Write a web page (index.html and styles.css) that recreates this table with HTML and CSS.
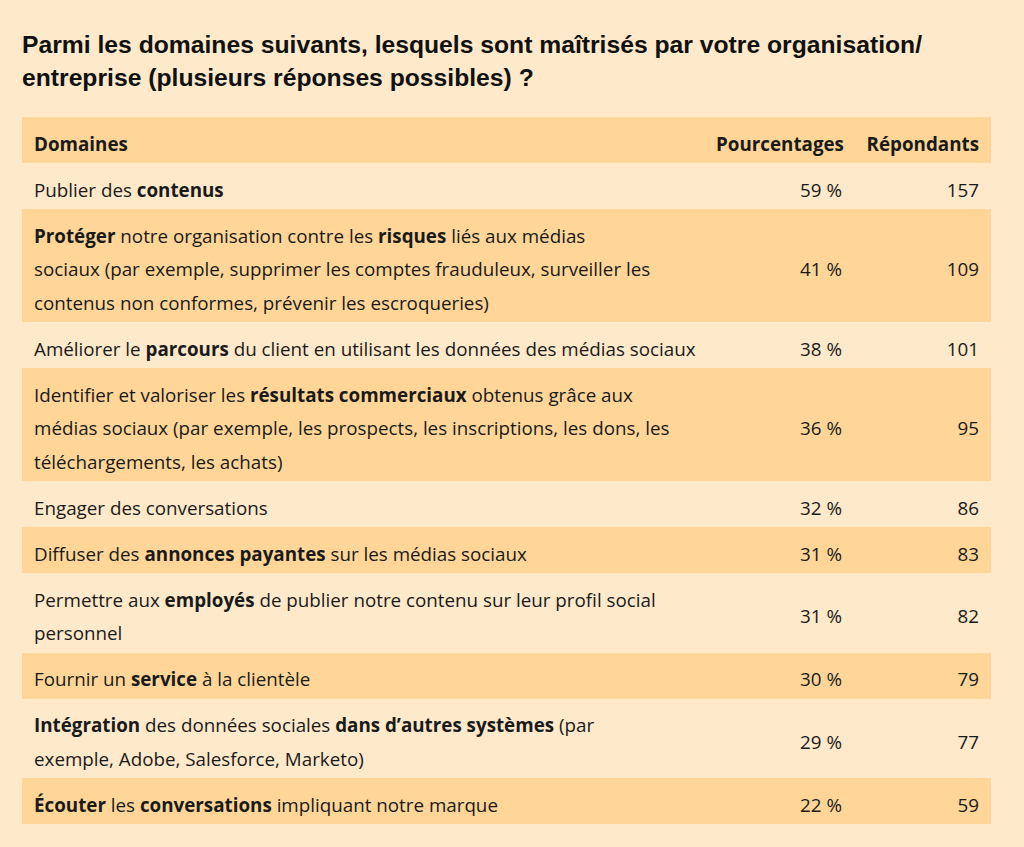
FILE: index.html
```html
<!DOCTYPE html>
<html lang="fr">
<head>
<meta charset="utf-8">
<link rel="stylesheet" href="styles.css">
</head>
<body>
<main class="page">
  <h1 class="title">Parmi les domaines suivants, lesquels sont maîtrisés par votre organisation/<br>entreprise (plusieurs réponses possibles) ?</h1>
  <div class="table">
    <div class="row head">
      <div class="c1">Domaines</div>
      <div class="c2">Pourcentages</div>
      <div class="c3">Répondants</div>
    </div>
    <div class="row light">
      <div class="c1">Publier des <b>contenus</b></div>
      <div class="c2">59 %</div>
      <div class="c3">157</div>
    </div>
    <div class="row dark">
      <div class="c1"><b>Protéger</b> notre organisation contre les <b>risques</b> liés aux médias<br>sociaux (par exemple, supprimer les comptes frauduleux, surveiller les<br>contenus non conformes, prévenir les escroqueries)</div>
      <div class="c2">41 %</div>
      <div class="c3">109</div>
    </div>
    <div class="row light">
      <div class="c1">Améliorer le <b>parcours</b> du client en utilisant les données des médias sociaux</div>
      <div class="c2">38 %</div>
      <div class="c3">101</div>
    </div>
    <div class="row dark">
      <div class="c1">Identifier et valoriser les <b>résultats commerciaux</b> obtenus grâce aux<br>médias sociaux (par exemple, les prospects, les inscriptions, les dons, les<br>téléchargements, les achats)</div>
      <div class="c2">36 %</div>
      <div class="c3">95</div>
    </div>
    <div class="row light">
      <div class="c1">Engager des conversations</div>
      <div class="c2">32 %</div>
      <div class="c3">86</div>
    </div>
    <div class="row dark">
      <div class="c1">Diffuser des <b>annonces payantes</b> sur les médias sociaux</div>
      <div class="c2">31 %</div>
      <div class="c3">83</div>
    </div>
    <div class="row light">
      <div class="c1">Permettre aux <b>employés</b> de publier notre contenu sur leur profil social<br>personnel</div>
      <div class="c2">31 %</div>
      <div class="c3">82</div>
    </div>
    <div class="row dark">
      <div class="c1">Fournir un <b>service</b> à la clientèle</div>
      <div class="c2">30 %</div>
      <div class="c3">79</div>
    </div>
    <div class="row light">
      <div class="c1"><b>Intégration</b> des données sociales <b>dans d’autres systèmes</b> (par<br>exemple, Adobe, Salesforce, Marketo)</div>
      <div class="c2">29 %</div>
      <div class="c3">77</div>
    </div>
    <div class="row dark">
      <div class="c1"><b>Écouter</b> les <b>conversations</b> impliquant notre marque</div>
      <div class="c2">22 %</div>
      <div class="c3">59</div>
    </div>
  </div>
</main>
</body>
</html>
```
FILE: styles.css
```css
html, body {
  margin: 0;
  padding: 0;
  background: #fee9ca;
}
.page {
  padding: 28px 33px 20px 22px;
  color: #1a1a1a;
}
.title {
  font-family: "Liberation Sans", Arial, sans-serif;
  font-weight: bold;
  font-size: 24.7px;
  line-height: 33px;
  margin: 0 0 23px 0;
  color: #111;
  white-space: nowrap;
}
.table {
  width: 969px;
  font-family: "Open Sans", sans-serif;
  font-size: 18.8px;
}
.row {
  display: grid;
  grid-template-columns: 682px 150px 137px;
  align-items: center;
  line-height: 33.5px;
}
.row > div {
  padding: 10.5px 12px 2px 12px;
}
.c1 {
  padding-right: 6px !important;
  white-space: nowrap;
}
.c2, .c3 { text-align: right; }
.head { background: #ffd697; font-weight: 700; }
.dark { background: #ffd697; }
.light { background: #fee9ca; }
b { font-weight: 700; }
```
